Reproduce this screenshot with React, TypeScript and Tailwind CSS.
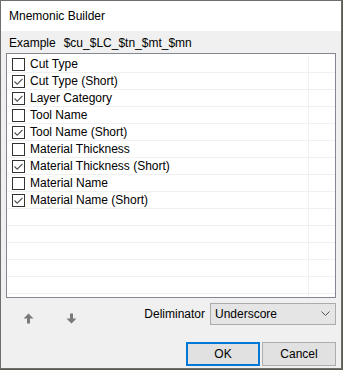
import React from 'react';

const fields = [
  { label: 'Cut Type', checked: false },
  { label: 'Cut Type (Short)', checked: true },
  { label: 'Layer Category', checked: true },
  { label: 'Tool Name', checked: false },
  { label: 'Tool Name (Short)', checked: true },
  { label: 'Material Thickness', checked: false },
  { label: 'Material Thickness (Short)', checked: true },
  { label: 'Material Name', checked: false },
  { label: 'Material Name (Short)', checked: true },
];

const Check: React.FC<{ checked: boolean }> = ({ checked }) => (
  <div className="w-[13px] h-[13px] border border-[#333333] bg-white flex items-center justify-center shrink-0">
    {checked && (
      <svg width="11" height="11" viewBox="0 0 11 11">
        <path d="M1.5 5.5 L4.2 8.2 L9.5 2.8" fill="none" stroke="#4d4d4d" strokeWidth="1.1" />
      </svg>
    )}
  </div>
);

const ArrowUp = () => (
  <svg width="11" height="11" viewBox="0 0 11 11">
    <path d="M5.5 0.5 L10.5 5.5 L7 5.5 L7 10.5 L4 10.5 L4 5.5 L0.5 5.5 Z" fill="#7a7a7a" />
  </svg>
);

const ArrowDown = () => (
  <svg width="11" height="11" viewBox="0 0 11 11">
    <path d="M5.5 10.5 L10.5 5.5 L7 5.5 L7 0.5 L4 0.5 L4 5.5 L0.5 5.5 Z" fill="#7a7a7a" />
  </svg>
);

export default function App() {
  const rows = [...fields, ...Array.from({ length: 6 }, () => null)];

  return (
    <div className="w-[343px] h-[370px] bg-[#5c5a48] font-['Liberation_Sans',Arial,sans-serif] text-[12px] text-black">
      <div className="w-[342px] h-[369px] border border-[#6e6e6e] flex flex-col">
        {/* Title bar */}
        <div className="h-[30px] bg-white flex items-center pl-2 pb-[1px] text-[12px]">Mnemonic Builder</div>

        {/* Body */}
        <div className="flex-1 bg-[#f0f0f0] px-[5px] flex flex-col">
          <div className="h-[22px] flex items-center pl-[3px] pt-[2px] gap-[8px]">
            <span>Example</span>
            <span>$cu_$LC_$tn_$mt_$mn</span>
          </div>

          {/* List */}
          <div className="h-[245px] border border-[#828790] bg-white overflow-hidden pt-[2px] relative">
            <div className="absolute top-[2px] bottom-0 left-[301px] w-px bg-[#f0f0f0]" />
            {rows.map((r, i) => (
              <div key={i} className="h-[17px] w-[328px] border-b border-[#f0f0f0] flex items-center pl-[5px]">
                {r && (
                  <>
                    <Check checked={r.checked} />
                    <span className="ml-[5px] leading-none">{r.label}</span>
                  </>
                )}
              </div>
            ))}
          </div>

          {/* Arrows + deliminator */}
          <div className="mt-[5px] h-[22px] flex items-center">
            <div className="flex items-center pl-[17px] gap-[32px] pt-[8px]">
              <ArrowUp />
              <ArrowDown />
            </div>
            <div className="ml-auto flex items-center gap-[5px]">
              <span>Deliminator</span>
              <div className="w-[126px] h-[22px] border border-[#acacac] bg-[#e5e5e5] flex items-center pl-[4px] pr-[5px]">
                <span>Underscore</span>
                <svg className="ml-auto" width="9" height="6" viewBox="0 0 9 6">
                  <path d="M0.5 0.5 L4.5 4.5 L8.5 0.5" fill="none" stroke="#555555" strokeWidth="1" />
                </svg>
              </div>
            </div>
          </div>

          {/* Buttons */}
          <div className="mt-[17px] flex justify-end gap-[2px]">
            <button className="w-[74px] h-[24px] border-2 border-[#0078d7] bg-[#e1e1e1] flex items-center justify-center">OK</button>
            <button className="w-[74px] h-[24px] border border-[#adadad] bg-[#e1e1e1] flex items-center justify-center">Cancel</button>
          </div>
        </div>
      </div>
    </div>
  );
}
